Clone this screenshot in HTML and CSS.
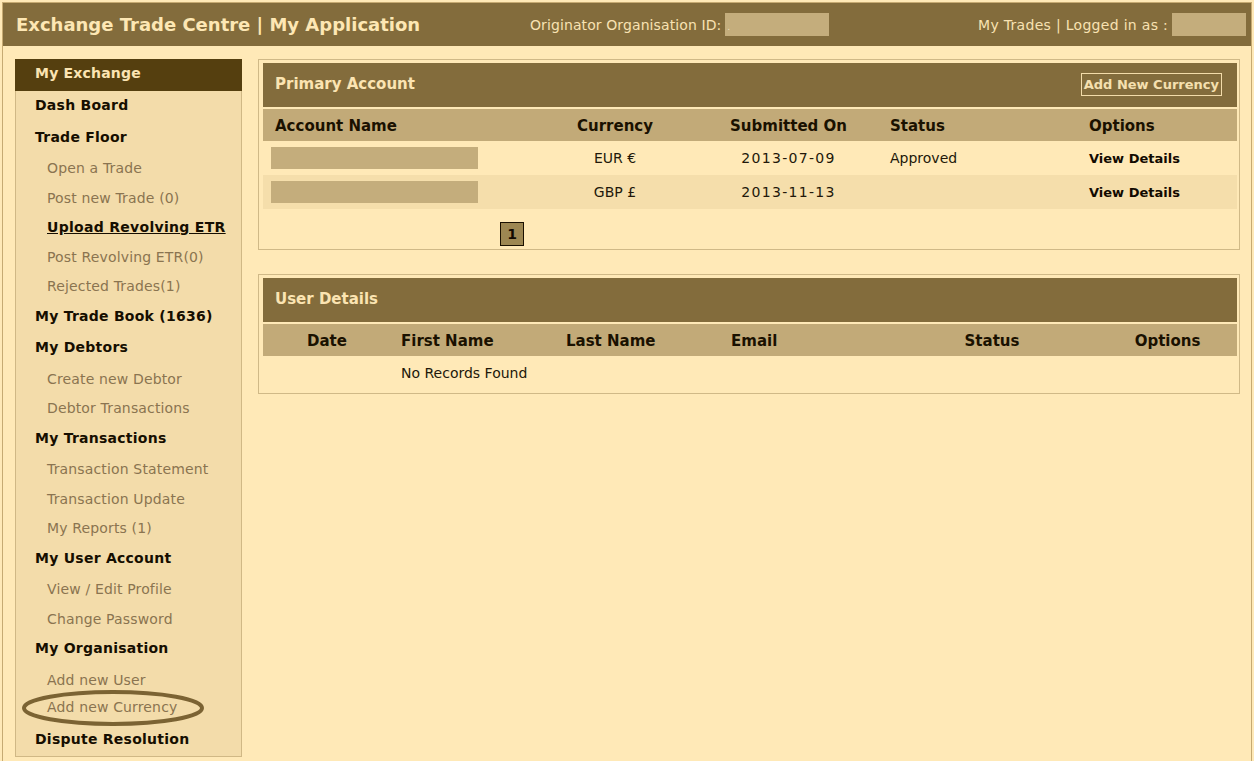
FILE: index.html
```html
<!DOCTYPE html>
<html lang="en">
<head>
<meta charset="utf-8">
<title>Exchange Trade Centre | My Application</title>
<link rel="stylesheet" href="styles.css">
</head>
<body>
<div class="page">
  <header class="topbar">
    <div class="brand">Exchange Trade Centre | My Application</div>
    <div class="org">Originator Organisation ID: <span class="blank blank-org">.</span></div>
    <div class="user">My Trades | Logged in as : <span class="blank blank-user"></span></div>
  </header>

  <div class="layout">
    <nav class="sidebar">
      <ul class="nav">
        <li class="nav-top">My Exchange</li>
        <li class="nav-main">Dash Board</li>
        <li class="nav-main">Trade Floor</li>
        <li class="nav-sub">Open a Trade</li>
        <li class="nav-sub">Post new Trade (0)</li>
        <li class="nav-sub nav-active">Upload Revolving ETR</li>
        <li class="nav-sub">Post Revolving ETR(0)</li>
        <li class="nav-sub">Rejected Trades(1)</li>
        <li class="nav-main">My Trade Book (1636)</li>
        <li class="nav-main">My Debtors</li>
        <li class="nav-sub">Create new Debtor</li>
        <li class="nav-sub">Debtor Transactions</li>
        <li class="nav-main">My Transactions</li>
        <li class="nav-sub">Transaction Statement</li>
        <li class="nav-sub">Transaction Update</li>
        <li class="nav-sub">My Reports (1)</li>
        <li class="nav-main">My User Account</li>
        <li class="nav-sub">View / Edit Profile</li>
        <li class="nav-sub">Change Password</li>
        <li class="nav-main">My Organisation</li>
        <li class="nav-sub">Add new User</li>
        <li class="nav-sub nav-circled">Add new Currency
          <svg class="oval" width="186" height="40" viewBox="0 0 186 40" aria-hidden="true">
            <ellipse cx="93" cy="20" rx="89" ry="16" fill="none" stroke="#7b6333" stroke-width="4"/>
          </svg>
        </li>
        <li class="nav-main">Dispute Resolution</li>
      </ul>
    </nav>

    <main class="content">
      <section class="panel">
        <div class="panel-head">
          <span class="panel-title">Primary Account</span>
          <span class="btn-add">Add New Currency</span>
        </div>
        <table class="grid grid-account">
          <colgroup>
            <col class="c-name"><col class="c-cur"><col class="c-date"><col class="c-status"><col class="c-opt">
          </colgroup>
          <thead>
            <tr>
              <th class="t-name">Account Name</th>
              <th class="t-center">Currency</th>
              <th class="t-center">Submitted On</th>
              <th class="t-status">Status</th>
              <th class="t-opt">Options</th>
            </tr>
          </thead>
          <tbody>
            <tr>
              <td class="d-name"><span class="blank blank-name"></span></td>
              <td class="t-center">EUR €</td>
              <td class="t-center d-date">2013-07-09</td>
              <td class="t-status">Approved</td>
              <td class="t-opt"><span class="link">View Details</span></td>
            </tr>
            <tr class="alt">
              <td class="d-name"><span class="blank blank-name"></span></td>
              <td class="t-center">GBP £</td>
              <td class="t-center d-date">2013-11-13</td>
              <td class="t-status"></td>
              <td class="t-opt"><span class="link">View Details</span></td>
            </tr>
          </tbody>
        </table>
        <div class="pager"><span class="page-num">1</span></div>
      </section>

      <section class="panel panel-users">
        <div class="panel-head">
          <span class="panel-title">User Details</span>
        </div>
        <table class="grid grid-users">
          <colgroup>
            <col class="u-date"><col class="u-first"><col class="u-last"><col class="u-email"><col class="u-status"><col class="u-opt">
          </colgroup>
          <thead>
            <tr>
              <th class="t-center">Date</th>
              <th class="u-left">First Name</th>
              <th class="u-left">Last Name</th>
              <th class="u-left">Email</th>
              <th class="t-center">Status</th>
              <th class="t-center">Options</th>
            </tr>
          </thead>
          <tbody>
            <tr>
              <td></td>
              <td class="u-left" colspan="5">No Records Found</td>
            </tr>
          </tbody>
        </table>
      </section>
    </main>
  </div>
</div>
</body>
</html>
```

FILE: styles.css
```css
* { box-sizing: border-box; }

html, body {
  margin: 0;
  padding: 0;
  background: #ffe9b7;
}

body {
  font-family: "DejaVu Sans", Verdana, sans-serif;
  font-size: 14px;
  color: #1c1200;
}

.page {
  margin: 2px 2px 0 2px;
  width: 1250px;
  min-height: 759px;
  border: 1px solid #c6aa72;
  border-bottom: none;
  background: #ffe9b7;
}

/* ---------- top bar ---------- */
.topbar {
  display: flex;
  align-items: center;
  height: 43px;
  background: #836c3c;
  color: #f8e2b2;
  padding: 0 5px 0 13px;
}

.brand {
  width: 514px;
  flex: none;
  font-size: 18px;
  font-weight: bold;
  color: #fde7b4;
  letter-spacing: 0;
}

.org, .user {
  display: flex;
  align-items: center;
  gap: 4px;
  font-size: 14px;
  letter-spacing: 0.1px;
}

.user {
  margin-left: auto;
  letter-spacing: 0.3px;
}

.blank {
  display: inline-block;
  background: #c4ad7c;
}

.blank-org {
  width: 104px;
  height: 23px;
  font-size: 8px;
  color: #f5e6c6;
  line-height: 30px;
  padding-left: 2px;
}

.blank-user {
  width: 74px;
  height: 23px;
}

/* ---------- layout ---------- */
.layout {
  display: flex;
  align-items: flex-start;
  gap: 16px;
  padding: 13px 11px 0 12px;
}

/* ---------- sidebar ---------- */
.sidebar {
  width: 227px;
  flex: none;
  background: #f3dcaa;
  border: 1px solid #d0b885;
}

.nav {
  list-style: none;
  margin: 0;
  padding: 0;
}

.nav li { white-space: nowrap; }

.nav-top {
  background: #553f0f;
  color: #fbe4b2;
  font-weight: bold;
  line-height: 28px;
  margin: -1px -1px 0 -1px;
  padding: 0 0 4px 20px;
  letter-spacing: 0.2px;
}

.nav-main {
  font-weight: bold;
  color: #160e00;
  line-height: 28px;
  padding: 0 0 3.5px 19px;
  letter-spacing: 0.25px;
}

.nav-sub {
  color: #8a7450;
  line-height: 29.5px;
  padding-left: 31px;
  letter-spacing: 0.15px;
}

.nav-active {
  color: #160e00;
  font-weight: bold;
  text-decoration: underline;
  letter-spacing: 0.3px;
}

.nav-circled {
  position: relative;
  margin-top: -2.5px;
  padding-bottom: 2.5px;
}

.oval {
  position: absolute;
  left: 4px;
  top: -5px;
  pointer-events: none;
}

/* ---------- content ---------- */
.content {
  flex: 1;
  display: flex;
  flex-direction: column;
  gap: 24px;
  width: 981px;
}

.panel {
  border: 1px solid #d0b987;
  padding: 3px 2px 3px 4px;
}

.panel-head {
  height: 44px;
  background: #836c3c;
  display: flex;
  align-items: center;
  justify-content: space-between;
  padding: 0 15px 0 12px;
  margin-bottom: 2px;
}

.panel-title {
  color: #fbe4b2;
  font-weight: bold;
  font-size: 15px;
  margin-top: -2px;
}

.btn-add {
  border: 1px solid #f3dcaa;
  color: #f5e0b0;
  font-weight: bold;
  font-size: 13px;
  height: 23px;
  line-height: 21px;
  padding: 0 2px;
  margin-top: -2px;
}

.grid {
  width: 100%;
  border-collapse: collapse;
  table-layout: fixed;
}

.grid th {
  background: #c2aa78;
  font-weight: bold;
  font-size: 15px;
  height: 32px;
  padding: 0;
  padding-top: 2px;
  color: #1a1100;
}

.grid td {
  height: 34px;
  padding: 0;
  color: #22180a;
}

.grid tr.alt td { background: #f5deab; }

.c-name { width: 277px; }
.c-cur { width: 150px; }
.c-date { width: 197px; }
.c-status { width: 190px; }
.c-opt { width: auto; }

.t-name { text-align: left; padding-left: 12px !important; }
.d-name { padding-left: 8px !important; }
.t-center { text-align: center; }
.t-status { text-align: left; padding-left: 3px !important; }
.t-opt { text-align: left; padding-left: 12px !important; }

.d-date { letter-spacing: 1.3px; }

.blank-name {
  width: 207px;
  height: 22px;
  vertical-align: middle;
}

.link {
  font-weight: bold;
  font-size: 13px;
  color: #120a00;
}

.pager {
  padding: 13px 0 0 237px;
}

.page-num {
  display: inline-block;
  width: 24px;
  height: 24px;
  border: 1px solid #1a1000;
  background: #9d8752;
  font-weight: bold;
  font-size: 14px;
  text-align: center;
  line-height: 22px;
  color: #120a00;
  vertical-align: top;
}

.u-date { width: 128px; }
.u-first { width: 165px; }
.u-last { width: 165px; }
.u-email { width: 165px; }
.u-status { width: 212px; }
.u-opt { width: auto; }

.u-left { text-align: left; padding-left: 10px !important; }
```
